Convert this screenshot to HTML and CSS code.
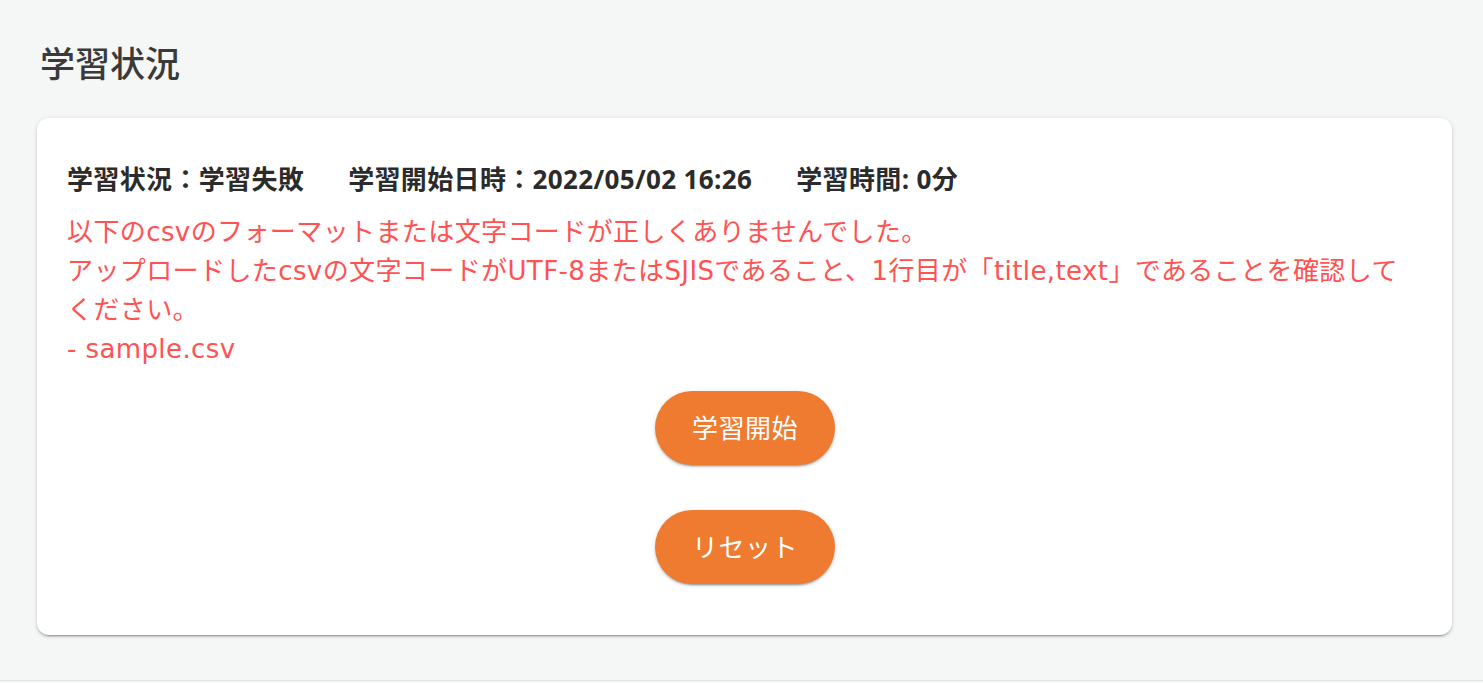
FILE: index.html
```html
<!DOCTYPE html>
<html lang="ja">
<head>
  <meta charset="UTF-8" />
  <meta name="viewport" content="width=device-width, initial-scale=1.0"/>
  <title>学習状況</title>
  <link rel="stylesheet" href="styles.css">
</head>
<body>
  <main class="page">
    <h2 class="page-title">学習状況</h2>

    <div class="card">
      <div class="status-row">
        <span>学習状況：学習失敗</span>
        <span>学習開始日時：2022/05/02 16:26</span>
        <span>学習時間: 0分</span>
      </div>

      <p class="message">以下のcsvのフォーマットまたは文字コードが正しくありませんでした。
アップロードしたcsvの文字コードがUTF-8またはSJISであること、1行目が「title,text」であることを確認してください。
- sample.csv</p>

      <div class="actions">
        <button type="button" class="btn">学習開始</button>
        <button type="button" class="btn">リセット</button>
      </div>
    </div>
  </main>
  <footer class="footer"></footer>
</body>
</html>
```

FILE: styles.css
```css
html, body {
  margin: 0;
  padding: 0;
}

body {
  font-family: "Noto Sans CJK JP", sans-serif;
  background-color: #f5f6f6;
  color: #333;
  display: flex;
  flex-direction: column;
  min-height: 100vh;
}

.page {
  flex: 1;
  padding: 0 31px 0 37px;
}

.page-title {
  margin: 0;
  padding-top: 41px;
  padding-left: 3px;
  font-size: 35px;
  line-height: 42px;
  font-weight: 500;
  color: #3a3a3a;
}

.card {
  margin-top: 35px;
  background: white;
  border-radius: 12px;
  box-shadow: 0 3px 1px -2px rgba(0,0,0,0.2), 0 2px 2px 0 rgba(0,0,0,0.14), 0 1px 5px 0 rgba(0,0,0,0.12);
  padding: 42px 29px 51px 30px;
}

.status-row {
  display: flex;
  gap: 44px;
  font-family: "Open Sans", "Noto Sans CJK JP", sans-serif;
  font-weight: bold;
  font-size: 26px;
  line-height: 38px;
  letter-spacing: 0.35px;
  color: #2b2b2b;
}

.message {
  margin: 15px 0 0;
  max-width: 1350px;
  white-space: pre-line;
  font-family: "DejaVu Sans", "Noto Sans CJK JP", sans-serif;
  font-size: 26px;
  line-height: 39px;
  letter-spacing: 0.4px;
  color: #ff5252;
}

.actions {
  margin-top: 22px;
  display: flex;
  flex-direction: column;
  align-items: center;
  gap: 45px;
}

.btn {
  width: 180px;
  height: 74px;
  border: none;
  border-radius: 37px;
  background-color: #ee7b30;
  color: white;
  font-family: "Noto Sans CJK JP", sans-serif;
  font-size: 26px;
  font-weight: normal;
  letter-spacing: 0.5px;
  padding-bottom: 4px;
  cursor: pointer;
  box-shadow: 0 3px 1px -2px rgba(0,0,0,0.2), 0 2px 2px 0 rgba(0,0,0,0.14), 0 1px 5px 0 rgba(0,0,0,0.12);
}

.footer {
  height: 2px;
  border-top: 1px solid #e2e2e2;
}
```
